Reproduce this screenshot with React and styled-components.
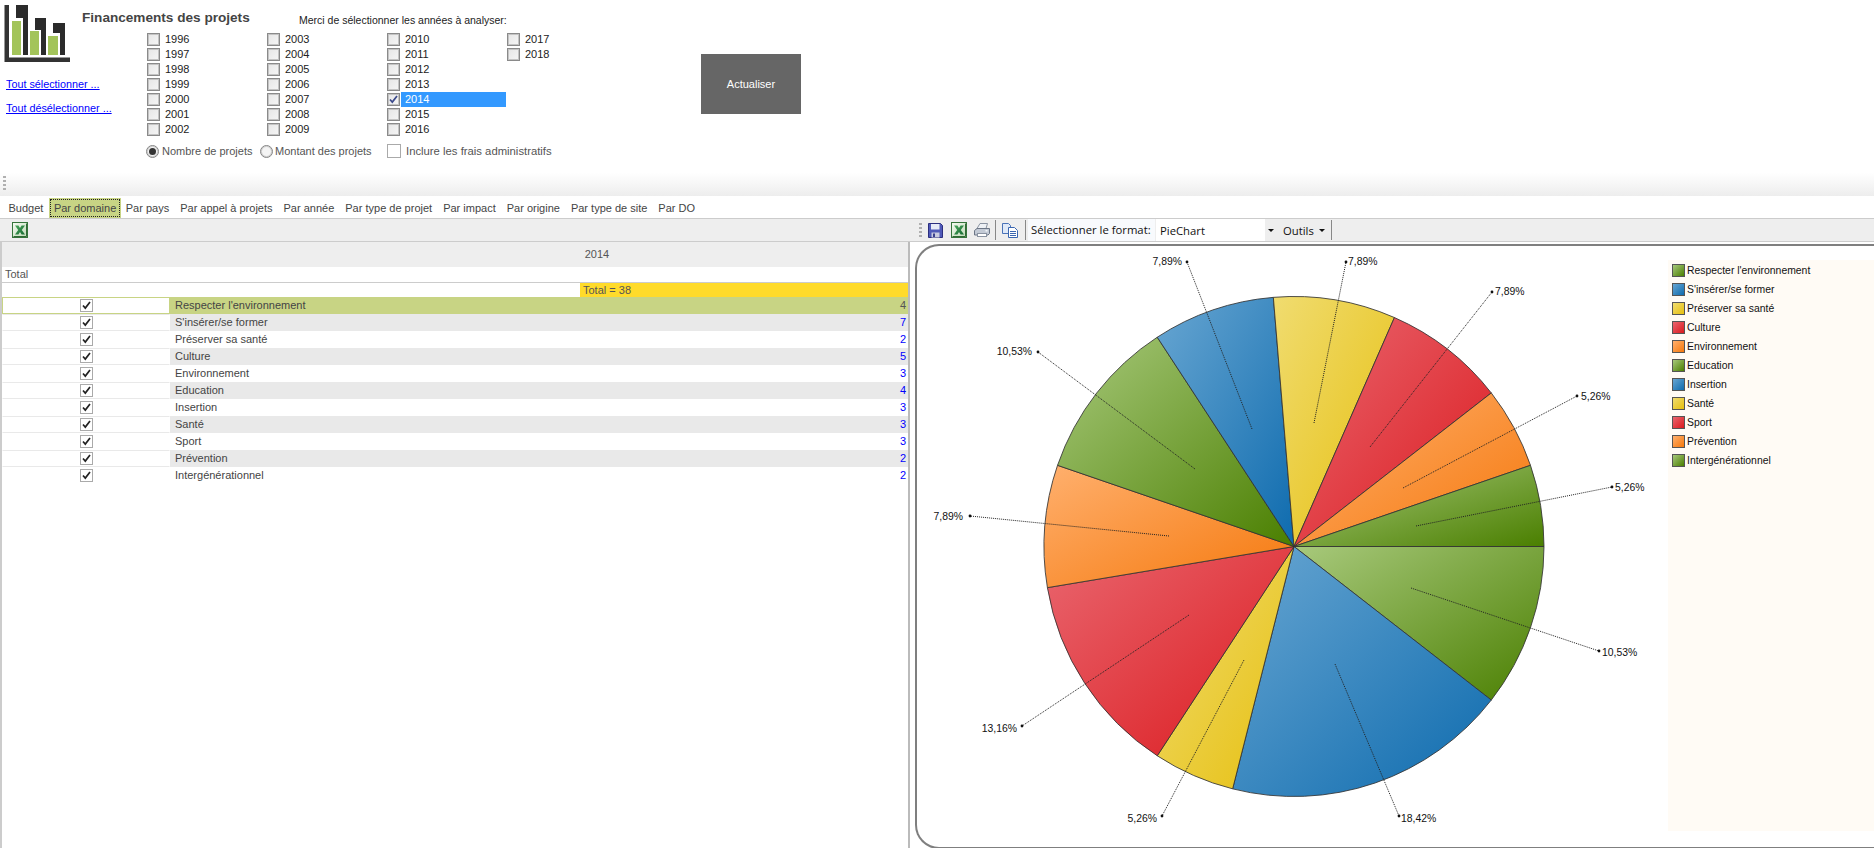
import React from 'react';
import styled, { createGlobalStyle } from 'styled-components';

const GlobalStyle = createGlobalStyle`
    html, body {
        margin: 0;
        height: 100%;
        overflow: hidden;
        background: #fff;
        font-family: "Liberation Sans", Arial, sans-serif;
        font-size: 11px;
        color: #222;
    }
`;

const Page = styled.div`
    width: 1874px;
    height: 848px;
    display: flex;
    flex-direction: column;
    overflow: hidden;
`;

/* ---------- top filter area ---------- */
const Header = styled.div`
    height: 170px;
    flex: none;
    display: flex;
`;

const LeftCol = styled.div`
    width: 82px;
    flex: none;
`;

const Logo = styled.svg`
    display: block;
    width: 72px;
    height: 64px;
`;

const Links = styled.div`
    display: flex;
    flex-direction: column;
    gap: 10px;
    margin-top: 13px;
    padding-left: 6px;
    white-space: nowrap;
    font-size: 10.8px;
`;

const ActionLink = styled.a`
    color: #0000ff;
    text-decoration: underline;
    line-height: 14px;
    cursor: pointer;
`;

const MainCol = styled.div`
    width: 619px;
    flex: none;
`;

const TitleRow = styled.div`
    height: 32px;
    display: flex;
    align-items: flex-start;
`;

const Title = styled.div`
    width: 217px;
    padding-top: 10px;
    font-size: 13.6px;
    line-height: 16px;
    font-weight: bold;
    color: #444;
`;

const Prompt = styled.div`
    padding-top: 13px;
    line-height: 14px;
    font-size: 10.5px;
    color: #222;
`;

const YearGrid = styled.div`
    margin-left: 65px;
    display: grid;
    grid-auto-flow: column;
    grid-template-rows: repeat(7, 15px);
    grid-auto-columns: 120px;
`;

const YearItem = styled.label`
    display: flex;
    align-items: center;
`;

const YearLabel = styled.span`
    width: 105px;
    height: 15px;
    line-height: 15px;
    margin-left: 1px;
    padding-left: 4px;
    box-sizing: border-box;
    background: ${(p) => (p.$selected ? '#3399ff' : 'transparent')};
    color: ${(p) => (p.$selected ? '#fff' : '#222')};
`;

const BoxFrame = styled.span`
    width: ${(p) => p.$size}px;
    height: ${(p) => p.$size}px;
    box-sizing: border-box;
    flex: none;
    display: flex;
    align-items: center;
    justify-content: center;
    background: ${(p) => p.$bg};
    border: 1px solid ${(p) => p.$edge};
    box-shadow: ${(p) => p.$inner};
`;

const OptionsRow = styled.div`
    display: flex;
    align-items: center;
    height: 14px;
    margin: 7px 0 0 64px;
`;

const RadioItem = styled.label`
    width: ${(p) => p.$width}px;
    display: flex;
    align-items: center;
    gap: ${(p) => p.$gap}px;
    color: #555;
`;

const RadioCircle = styled.span`
    width: 13px;
    height: 13px;
    box-sizing: border-box;
    border-radius: 50%;
    border: 1px solid #858585;
    box-shadow: inset 0 0 0 1px #cfcfcf;
    background: #f4f4f4;
    display: flex;
    align-items: center;
    justify-content: center;
`;

const RadioDot = styled.span`
    width: 7px;
    height: 7px;
    border-radius: 50%;
    background: #333;
`;

const AdminItem = styled.label`
    display: flex;
    align-items: center;
    gap: 5px;
    font-size: 11.3px;
    color: #555;
`;

const RefreshButton = styled.button`
    width: 100px;
    height: 60px;
    margin-top: 54px;
    border: none;
    padding: 0;
    background: #666;
    color: #fff;
    font: 11px "Liberation Sans", Arial, sans-serif;
`;

/* ---------- strips and tabs ---------- */
const ToolStrip = styled.div`
    height: 26px;
    flex: none;
    display: flex;
    align-items: center;
    padding-left: 3px;
    box-sizing: border-box;
    background: linear-gradient(#fff 10%, #ededed);
`;

const Grip = styled.span`
    width: 3px;
    height: ${(p) => p.$h}px;
    flex: none;
    background: repeating-linear-gradient(#b0b0b0 0 2px, transparent 2px 4px);
`;

const TabBar = styled.div`
    height: 23px;
    flex: none;
    box-sizing: border-box;
    display: flex;
    align-items: flex-end;
    padding-left: 3px;
    border-bottom: 1px solid #ccc;
`;

const Tab = styled.div`
    height: 20px;
    box-sizing: border-box;
    line-height: ${(p) => (p.$active ? '16px' : '20px')};
    padding: 0 ${(p) => (p.$active ? '3px' : '5.5px')};
    margin-right: ${(p) => (p.$active ? '-1px' : '0')};
    color: #444;
    white-space: nowrap;
    background: ${(p) => (p.$active ? '#c8d484' : 'transparent')};
    ${(p) => p.$active && `
        border: 2px solid #c8d484;
        outline: 1px dotted #222;
        outline-offset: -2px;
    `}
`;

/* ---------- work area ---------- */
const Work = styled.div`
    flex: 1;
    display: flex;
    min-height: 0;
`;

const LeftPane = styled.div`
    width: 915px;
    flex: none;
    display: flex;
    flex-direction: column;
`;

const PaneBar = styled.div`
    height: 23px;
    flex: none;
    box-sizing: border-box;
    display: flex;
    align-items: center;
    padding-left: ${(p) => p.$pad}px;
    background: #eee;
    border-bottom: 1px solid #ccc;
    white-space: nowrap;
`;

const IconButton = styled.span`
    width: 23px;
    height: 20px;
    flex: none;
    display: flex;
    align-items: center;
    justify-content: center;
`;

const DataGrid = styled.div`
    width: 910px;
    flex: 1;
    box-sizing: border-box;
    border-left: 2px solid #ccc;
    border-right: 2px solid #bbb;
    display: flex;
    flex-direction: column;
`;

const GridHead = styled.div`
    height: 25px;
    flex: none;
    background: #eee;
    line-height: 25px;
    text-align: center;
    padding-left: 284px;
    color: #555;
`;

const TotalRow = styled.div`
    height: 16px;
    flex: none;
    box-sizing: border-box;
    border-bottom: 1px solid #ccc;
    padding-left: 3px;
    line-height: 15px;
    color: #555;
`;

const SummaryRow = styled.div`
    height: 14px;
    flex: none;
    display: grid;
    grid-template-columns: 578px 1fr;
`;

const SummaryCell = styled.div`
    background: #ffdb2a;
    padding-left: 3px;
    line-height: 14px;
    color: #555;
`;

const DataRow = styled.div`
    height: 17px;
    flex: none;
    display: grid;
    grid-template-columns: 168px 1fr;
`;

const CheckCell = styled.div`
    box-sizing: border-box;
    display: flex;
    align-items: center;
    justify-content: center;
    border: 1px solid ${(p) => (p.$selected ? '#c8d484' : 'transparent')};
    border-top-color: ${(p) => (p.$selected ? '#c8d484' : p.$odd ? '#e9e9e9' : 'transparent')};
    border-bottom-color: ${(p) => (p.$selected ? '#c8d484' : p.$odd ? '#e9e9e9' : 'transparent')};
`;

const ValueCell = styled.div`
    display: flex;
    justify-content: space-between;
    padding: 0 2px 0 5px;
    line-height: 17px;
    color: #444;
    background: ${(p) => (p.$selected ? '#c8d484' : p.$odd ? '#e9e9e9' : '#fff')};
`;

const Count = styled.span`
    color: ${(p) => (p.$selected ? '#555' : '#0000ff')};
`;

const RightPane = styled.div`
    flex: 1;
    min-width: 0;
    display: flex;
    flex-direction: column;
`;

const Spacer = styled.span`
    width: 2px;
    flex: none;
`;

const Divider = styled.span`
    width: 1px;
    height: 20px;
    flex: none;
    margin: ${(p) => p.$margin};
    background: #888;
`;

const BarLabel = styled.span`
    width: 127px;
    height: 22px;
    flex: none;
    box-sizing: border-box;
    padding-left: 3px;
    background: #f8fafd;
    line-height: 22px;
    font-family: "Open Sans", sans-serif;
    font-size: 11.3px;
    color: #111;
`;

const Combo = styled.span`
    width: 120px;
    height: 22px;
    flex: none;
    margin-left: 1px;
    display: flex;
    background: #fff;
    font-family: "Open Sans", sans-serif;
    font-size: 11.3px;
    line-height: 24px;
    color: #111;
`;

const ComboText = styled.span`
    flex: 1;
    padding-left: 4px;
`;

const ComboButton = styled.span`
    width: 11px;
    background: #eee;
    display: flex;
    align-items: center;
    justify-content: center;
`;

const Caret = styled.span`
    width: 0;
    height: 0;
    border-left: 3px solid transparent;
    border-right: 3px solid transparent;
    border-top: 3px solid #111;
`;

const ToolMenu = styled.span`
    width: 48px;
    flex: none;
    display: flex;
    align-items: center;
    gap: 5px;
    padding-left: 7px;
    box-sizing: content-box;
    font-family: "Open Sans", sans-serif;
    font-size: 11.3px;
    color: #111;
`;

const ChartPanel = styled.div`
    flex: none;
    height: 605px;
    margin-top: 2px;
    box-sizing: border-box;
    display: flex;
    border: 2px solid #7f7f7f;
    border-right: none;
    border-radius: 24px 0 0 24px;
`;

const ChartSvg = styled.svg`
    width: 751px;
    height: 600px;
    flex: none;
    font-family: "Liberation Sans", Arial, sans-serif;
    font-size: 10.4px;
`;

const Legend = styled.div`
    flex: 1;
    height: 571px;
    margin-top: 14px;
    padding: 1px 0 0 4px;
    box-sizing: border-box;
    background: #fffbf5;
    font-size: 10.4px;
    color: #111;
`;

const LegendItem = styled.div`
    height: 19px;
    display: flex;
    align-items: center;
    gap: 2px;
`;

const Swatch = styled.span`
    width: 13px;
    height: 13px;
    flex: none;
    box-sizing: border-box;
    border: 1px solid #555;
    background: linear-gradient(135deg, ${(p) => p.$from}, ${(p) => p.$to});
`;

/* ---------- data ---------- */
const years = Array.from({ length: 23 }, (_, i) => 1996 + i);
const tabs = ['Budget', 'Par domaine', 'Par pays', 'Par appel à projets', 'Par année', 'Par type de projet', 'Par impact', 'Par origine', 'Par type de site', 'Par DO'];

const palette = {
    green: ['#a8c97c', '#4a7f00'],
    blue: ['#68a6d2', '#0e6bae'],
    yellow: ['#f0dc70', '#e6bf0e'],
    red: ['#e9666f', '#db1a1e'],
    orange: ['#ffb06e', '#f5780c'],
};

// start/end are the leader line ends, in page pixels
const domains = [
    { name: "Respecter l'environnement", count: 4, color: 'green', pct: '10,53%', start: [1411, 588], end: [1599, 651], label: [1602, 652] },
    { name: "S'insérer/se former", count: 7, color: 'blue', pct: '18,42%', start: [1335, 664], end: [1399, 816], label: [1401, 818] },
    { name: 'Préserver sa santé', count: 2, color: 'yellow', pct: '5,26%', start: [1244, 660], end: [1162, 816], label: [1157, 818], before: true },
    { name: 'Culture', count: 5, color: 'red', pct: '13,16%', start: [1189, 615], end: [1022, 726], label: [1017, 728], before: true },
    { name: 'Environnement', count: 3, color: 'orange', pct: '7,89%', start: [1169, 536], end: [970, 516], label: [963, 516], before: true },
    { name: 'Education', count: 4, color: 'green', pct: '10,53%', start: [1195, 469], end: [1038, 352], label: [1032, 351], before: true },
    { name: 'Insertion', count: 3, color: 'blue', pct: '7,89%', start: [1252, 429], end: [1187, 262], label: [1182, 261], before: true },
    { name: 'Santé', count: 3, color: 'yellow', pct: '7,89%', start: [1314, 423], end: [1346, 262], label: [1348, 261] },
    { name: 'Sport', count: 3, color: 'red', pct: '7,89%', start: [1370, 447], end: [1492, 292], label: [1495, 291] },
    { name: 'Prévention', count: 2, color: 'orange', pct: '5,26%', start: [1403, 488], end: [1577, 396], label: [1581, 396] },
    { name: 'Intergénérationnel', count: 2, color: 'green', pct: '5,26%', start: [1416, 526], end: [1612, 487], label: [1615, 487] },
];

const total = domains.reduce((sum, d) => sum + d.count, 0);
const CX = 1294;
const CY = 546.5;
const R = 250;

const slicePath = (from, to) => {
    const a = (from / total) * Math.PI * 2;
    const b = (to / total) * Math.PI * 2;
    const large = b - a > Math.PI ? 1 : 0;
    return `M${CX} ${CY}L${CX + R * Math.cos(a)} ${CY + R * Math.sin(a)}A${R} ${R} 0 ${large} 1 ${CX + R * Math.cos(b)} ${CY + R * Math.sin(b)}Z`;
};

/* ---------- small drawings ---------- */
const Check = ({ color = '#222' }) => (
    <svg width="9" height="9" viewBox="0 0 9 9">
        <path d="M1 4.5l2.3 2.6L8 1" fill="none" stroke={color} strokeWidth="1.7" />
    </svg>
);

const Checkbox = ({ checked, flat, size = 13, color }) => (
    <BoxFrame
        $size={size}
        $edge={flat ? '#aaa' : '#8a8a8a'}
        $bg={flat ? '#fff' : 'linear-gradient(135deg, #e6e6e6, #f6f6f6)'}
        $inner={flat ? 'none' : 'inset 0 0 0 1px #c4c4c4'}
    >
        {checked && <Check color={color} />}
    </BoxFrame>
);

const ExcelIcon = () => (
    <svg width="16" height="16" viewBox="0 0 16 16">
        <defs>
            <linearGradient id="xl-bg" x1="0" y1="0" x2="1" y2="1">
                <stop offset="0" stopColor="#f6fbf2" />
                <stop offset="1" stopColor="#bcd9b4" />
            </linearGradient>
            <linearGradient id="xl-x" x1="0" y1="0" x2="1" y2="1">
                <stop offset="0" stopColor="#49a65a" />
                <stop offset="1" stopColor="#176b33" />
            </linearGradient>
        </defs>
        <rect x="0.5" y="0.5" width="15" height="15" fill="url(#xl-bg)" stroke="#35743a" />
        <path d="M14.5 1.5v13h-13" fill="none" stroke="#2f6a34" />
        <path d="M3 3.5h3.4L8 6l1.6-2.5H13L9.8 8l3.2 4.5H9.6L8 10l-1.6 2.5H3L6.2 8z" fill="url(#xl-x)" />
    </svg>
);

const SaveIcon = () => (
    <svg width="15" height="15" viewBox="0 0 15 15">
        <path d="M.5.5h12l2 2v12H.5z" fill="#4f59b8" stroke="#2c2f7f" />
        <rect x="3" y="1" width="8.5" height="5.5" fill="#e6eaf6" />
        <rect x="3.5" y="9.5" width="8" height="5" fill="#c9cbe0" />
        <rect x="5" y="10.5" width="2" height="3.5" fill="#3a3f8c" />
    </svg>
);

const PrintIcon = () => (
    <svg width="16" height="16" viewBox="0 0 16 16">
        <path d="M6 1.5h7.5L12 6.5H3z" fill="#eef1f5" stroke="#8a93a1" />
        <path d="M3 6.5h12.5v5l-1.5 1.5H.5V8.5z" fill="#c3cad5" stroke="#6c7686" />
        <rect x="3.5" y="11.5" width="9" height="3" fill="#fff" stroke="#8a93a1" />
        <rect x="11.5" y="8" width="2" height="1.5" fill="#f2f5f9" />
    </svg>
);

const CopyIcon = () => (
    <svg width="16" height="15" viewBox="0 0 16 15">
        <path d="M.5.5h6l2 2v8h-8z" fill="#dfe9f8" stroke="#4a73b8" />
        <path d="M6.5 4.5h6l3 3v7h-9z" fill="#fff" stroke="#3a66b0" />
        <path d="M8 8.5h6M8 10.5h6M8 12.5h6" stroke="#3a66b0" />
    </svg>
);

const App = () => (
    <Page>
        <GlobalStyle />
        <Header>
            <LeftCol>
                <Logo viewBox="0 0 72 64">
                    <path d="M4.5 5H9V57.5H70V62H4.5z" fill="#333" />
                    <path d="M12 21h9v34h-9zM30 31h9v24h-9zM48 36h10v19H48z" fill="#a3c45a" />
                    <path d="M16 5h12v50h-5V18H16zM35 18h11v37h-5V30H35zM53 23h12v32h-5V33h-7z" fill="#2b2b2b" />
                </Logo>
                <Links>
                    <ActionLink>Tout sélectionner ...</ActionLink>
                    <ActionLink>Tout désélectionner ...</ActionLink>
                </Links>
            </LeftCol>
            <MainCol>
                <TitleRow>
                    <Title>Financements des projets</Title>
                    <Prompt>Merci de sélectionner les années à analyser:</Prompt>
                </TitleRow>
                <YearGrid>
                    {years.map((year) => (
                        <YearItem key={year}>
                            <Checkbox checked={year === 2014} color="#3c4a8c" />
                            <YearLabel $selected={year === 2014}>{year}</YearLabel>
                        </YearItem>
                    ))}
                </YearGrid>
                <OptionsRow>
                    <RadioItem $width={114} $gap={3}>
                        <RadioCircle><RadioDot /></RadioCircle>
                        Nombre de projets
                    </RadioItem>
                    <RadioItem $width={127} $gap={2}>
                        <RadioCircle />
                        Montant des projets
                    </RadioItem>
                    <AdminItem>
                        <Checkbox flat size={14} />
                        Inclure les frais administratifs
                    </AdminItem>
                </OptionsRow>
            </MainCol>
            <RefreshButton>Actualiser</RefreshButton>
        </Header>

        <ToolStrip><Grip $h={15} /></ToolStrip>
        <TabBar>
            {tabs.map((tab) => (
                <Tab key={tab} $active={tab === 'Par domaine'}>{tab}</Tab>
            ))}
        </TabBar>

        <Work>
            <LeftPane>
                <PaneBar $pad={8}>
                    <IconButton><ExcelIcon /></IconButton>
                </PaneBar>
                <DataGrid>
                    <GridHead>2014</GridHead>
                    <TotalRow>Total</TotalRow>
                    <SummaryRow>
                        <span />
                        <SummaryCell>Total = {total}</SummaryCell>
                    </SummaryRow>
                    {domains.map((d, i) => (
                        <DataRow key={d.name}>
                            <CheckCell $selected={i === 0} $odd={i % 2 === 1}>
                                <Checkbox checked flat />
                            </CheckCell>
                            <ValueCell $selected={i === 0} $odd={i % 2 === 1}>
                                {d.name}
                                <Count $selected={i === 0}>{d.count}</Count>
                            </ValueCell>
                        </DataRow>
                    ))}
                </DataGrid>
            </LeftPane>

            <RightPane>
                <PaneBar $pad={4}>
                    <Grip $h={14} />
                    <Spacer />
                    <IconButton><SaveIcon /></IconButton>
                    <IconButton><ExcelIcon /></IconButton>
                    <IconButton><PrintIcon /></IconButton>
                    <Divider $margin="0 2px 0 2px" />
                    <IconButton><CopyIcon /></IconButton>
                    <Divider $margin="0 2px 0 4px" />
                    <BarLabel>Sélectionner le format:</BarLabel>
                    <Combo>
                        <ComboText>PieChart</ComboText>
                        <ComboButton><Caret /></ComboButton>
                    </Combo>
                    <ToolMenu>Outils <Caret /></ToolMenu>
                    <Divider $margin="0" />
                </PaneBar>
                <ChartPanel>
                    <ChartSvg viewBox="917 246 751 600">
                        <defs>
                            {Object.entries(palette).map(([key, [from, to]]) => (
                                <linearGradient key={key} id={`slice-${key}`} x1="0" y1="0" x2="1" y2="1">
                                    <stop offset="0" stopColor={from} />
                                    <stop offset="1" stopColor={to} />
                                </linearGradient>
                            ))}
                        </defs>
                        {domains.reduce((acc, d) => {
                            const from = acc.sum;
                            acc.sum += d.count;
                            acc.items.push(
                                <path
                                    key={d.name}
                                    d={slicePath(from, acc.sum)}
                                    fill={`url(#slice-${d.color})`}
                                    stroke="#333"
                                    strokeOpacity="0.85"
                                />
                            );
                            return acc;
                        }, { sum: 0, items: [] }).items}
                        {domains.map((d) => (
                            <g key={d.name}>
                                <line x1={d.start[0]} y1={d.start[1]} x2={d.end[0]} y2={d.end[1]} stroke="#222" strokeDasharray="1 1" />
                                <circle cx={d.end[0]} cy={d.end[1]} r="1.4" fill="#111" />
                                <text x={d.label[0]} y={d.label[1] + 3.5} textAnchor={d.before ? 'end' : 'start'} fill="#111">{d.pct}</text>
                            </g>
                        ))}
                    </ChartSvg>
                    <Legend>
                        {domains.map((d) => (
                            <LegendItem key={d.name}>
                                <Swatch $from={palette[d.color][0]} $to={palette[d.color][1]} />
                                {d.name}
                            </LegendItem>
                        ))}
                    </Legend>
                </ChartPanel>
            </RightPane>
        </Work>
    </Page>
);

export default App;
